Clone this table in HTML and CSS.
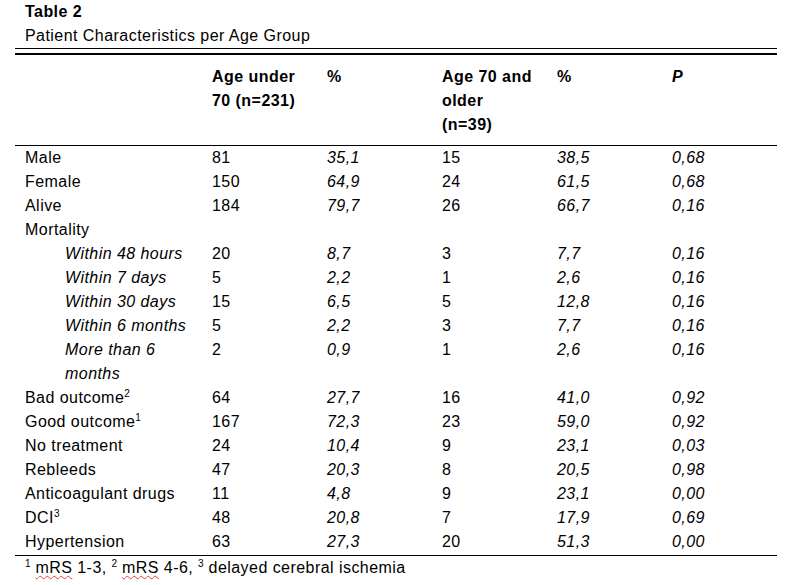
FILE: index.html
```html
<!DOCTYPE html>
<html>
<head>
<meta charset="utf-8">
<link rel="stylesheet" href="styles.css">
</head>
<body>
<div class="page">
  <div class="caption">
    <div class="title">Table 2</div>
    <div class="subtitle">Patient Characteristics per Age Group</div>
  </div>
  <div class="double-rule"></div>
  <table class="data">
    <colgroup>
      <col class="c-label"><col class="c-num"><col class="c-num"><col class="c-num"><col class="c-num"><col class="c-last">
    </colgroup>
    <thead>
      <tr>
        <th class="label"></th>
        <th>Age under<br>70 (n=231)</th>
        <th>%</th>
        <th>Age 70 and<br>older<br>(n=39)</th>
        <th>%</th>
        <th><em>P</em></th>
      </tr>
    </thead>
    <tbody>
      <tr><td class="label">Male</td><td>81</td><td class="it">35,1</td><td>15</td><td class="it">38,5</td><td class="it">0,68</td></tr>
      <tr><td class="label">Female</td><td>150</td><td class="it">64,9</td><td>24</td><td class="it">61,5</td><td class="it">0,68</td></tr>
      <tr><td class="label">Alive</td><td>184</td><td class="it">79,7</td><td>26</td><td class="it">66,7</td><td class="it">0,16</td></tr>
      <tr><td class="label">Mortality</td><td></td><td></td><td></td><td></td><td></td></tr>
      <tr><td class="label sub">Within 48 hours</td><td>20</td><td class="it">8,7</td><td>3</td><td class="it">7,7</td><td class="it">0,16</td></tr>
      <tr><td class="label sub">Within 7 days</td><td>5</td><td class="it">2,2</td><td>1</td><td class="it">2,6</td><td class="it">0,16</td></tr>
      <tr><td class="label sub">Within 30 days</td><td>15</td><td class="it">6,5</td><td>5</td><td class="it">12,8</td><td class="it">0,16</td></tr>
      <tr><td class="label sub">Within 6 months</td><td>5</td><td class="it">2,2</td><td>3</td><td class="it">7,7</td><td class="it">0,16</td></tr>
      <tr><td class="label sub">More than 6<br>months</td><td>2</td><td class="it">0,9</td><td>1</td><td class="it">2,6</td><td class="it">0,16</td></tr>
      <tr><td class="label">Bad outcome<sup>2</sup></td><td>64</td><td class="it">27,7</td><td>16</td><td class="it">41,0</td><td class="it">0,92</td></tr>
      <tr><td class="label">Good outcome<sup>1</sup></td><td>167</td><td class="it">72,3</td><td>23</td><td class="it">59,0</td><td class="it">0,92</td></tr>
      <tr><td class="label">No treatment</td><td>24</td><td class="it">10,4</td><td>9</td><td class="it">23,1</td><td class="it">0,03</td></tr>
      <tr><td class="label">Rebleeds</td><td>47</td><td class="it">20,3</td><td>8</td><td class="it">20,5</td><td class="it">0,98</td></tr>
      <tr><td class="label">Anticoagulant drugs</td><td>11</td><td class="it">4,8</td><td>9</td><td class="it">23,1</td><td class="it">0,00</td></tr>
      <tr><td class="label">DCI<sup>3</sup></td><td>48</td><td class="it">20,8</td><td>7</td><td class="it">17,9</td><td class="it">0,69</td></tr>
      <tr class="last"><td class="label">Hypertension</td><td>63</td><td class="it">27,3</td><td>20</td><td class="it">51,3</td><td class="it">0,00</td></tr>
    </tbody>
  </table>
  <div class="footnote"><sup>1</sup> <span class="spell">mRS</span> 1-3, <sup>2</sup> <span class="spell">mRS</span> 4-6, <sup>3</sup> delayed cerebral ischemia</div>
</div>
</body>
</html>
```
FILE: styles.css
```css
html, body {
  margin: 0;
  padding: 0;
  background: #ffffff;
}

body {
  font-family: "Liberation Sans", Arial, Helvetica, sans-serif;
  font-size: 16px;
  line-height: 24px;
  letter-spacing: 0.45px;
  color: #000000;
}

.page {
  width: 795px;
  height: 585px;
  overflow: hidden;
}

.caption {
  padding-left: 25px;
}

.title {
  font-weight: bold;
}

.double-rule {
  margin-left: 15px;
  width: 762px;
  height: 4px;
  border-top: 1px solid #000;
  border-bottom: 2px solid #000;
}

.data {
  margin-left: 15px;
  width: 762px;
  table-layout: fixed;
  border-collapse: collapse;
  border-spacing: 0;
}

.c-label { width: 197px; }
.c-num { width: 115px; }
.c-last { width: 105px; }

.data th,
.data td {
  padding: 0 10px 0 0;
  text-align: left;
  vertical-align: top;
  font-weight: normal;
  line-height: 24px;
}

.data th {
  font-weight: bold;
  padding-top: 10px;
  padding-bottom: 8px;
  border-bottom: 1px solid #000;
}

.data th em {
  font-style: italic;
}

.data .label {
  padding-left: 10px;
}

.data .sub {
  padding-left: 50px;
  font-style: italic;
}

.data .it {
  font-style: italic;
}

.data tr.last td {
  padding-bottom: 1px;
  border-bottom: 1px solid #000;
}

sup {
  font-size: 10px;
  line-height: 0;
  vertical-align: 6px;
  letter-spacing: 0;
}

.footnote {
  padding-left: 25px;
}

.spell {
  text-decoration: underline wavy #e0403a;
  text-decoration-thickness: 1px;
  text-underline-offset: 2px;
}
```
